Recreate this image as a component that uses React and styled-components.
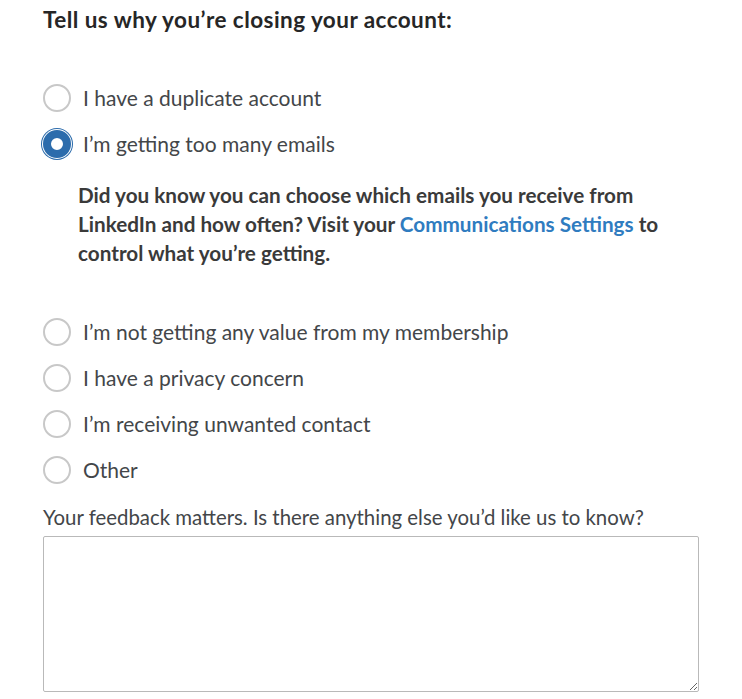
import React from "react";
import styled, { createGlobalStyle } from "styled-components";

const GlobalStyle = createGlobalStyle`
  body {
    margin: 0;
    background: #ffffff;
    font-family: Lato, "Open Sans", "Liberation Sans", sans-serif;
    color: #434649;
  }
`;

const reasons = [
  { id: "duplicate", label: "I have a duplicate account" },
  { id: "emails", label: "I’m getting too many emails", checked: true },
  { id: "value", label: "I’m not getting any value from my membership" },
  { id: "privacy", label: "I have a privacy concern" },
  { id: "contact", label: "I’m receiving unwanted contact" },
  { id: "other", label: "Other" },
];

const CloseAccount = () => {
  return (
    <Form>
      <Heading>Tell us why you’re closing your account:</Heading>
      <RadioList>
        {reasons.map((r) => (
          <React.Fragment key={r.id}>
            <RadioRow>
              <Radio checked={!!r.checked} />
              <Label>{r.label}</Label>
            </RadioRow>
            {r.checked && (
              <Hint>
                Did you know you can choose which emails you receive from
                LinkedIn and how often? Visit your{" "}
                <a href="#settings">Communications Settings</a> to control
                what you’re getting.
              </Hint>
            )}
          </React.Fragment>
        ))}
      </RadioList>
      <FeedbackLabel>
        Your feedback matters. Is there anything else you’d like us to know?
      </FeedbackLabel>
      <Feedback />
    </Form>
  );
};

const Form = styled.form`
  padding: 6px 0 0 43px;
  width: 656px;
`;

const Heading = styled.h2`
  margin: 0;
  font-size: 22.5px;
  line-height: 28px;
  letter-spacing: 0.45px;
  font-weight: 700;
  color: #262626;
`;

const RadioList = styled.div`
  margin-top: 41px;
  display: flex;
  flex-direction: column;
`;

const RadioRow = styled.label`
  display: flex;
  align-items: center;
  gap: 12px;
  height: 46px;
  cursor: pointer;
`;

const Radio = styled.span`
  box-sizing: border-box;
  flex: none;
  width: 28px;
  height: 28px;
  border-radius: 50%;
  border: ${(p) => (p.checked ? "8px solid #2c6cac" : "2px solid #c8c8c8")};
  background: #ffffff;
  box-shadow: ${(p) =>
    p.checked ? "0 0 0 1px #ffffff, 0 0 0 2px #2c6cac" : "none"};
`;

const Label = styled.span`
  font-size: 21px;
  line-height: 28px;
  color: #434649;
`;

const Hint = styled.p`
  margin: 14px 0 41px 35px;
  font-size: 20.7px;
  line-height: 29px;
  font-weight: 700;
  color: #3a3a3a;
  a {
    color: #2f7cc0;
    text-decoration: none;
  }
`;

const FeedbackLabel = styled.div`
  margin-top: 10px;
  font-size: 20.4px;
  line-height: 28px;
  color: #434649;
`;

const Feedback = styled.textarea`
  display: block;
  box-sizing: border-box;
  margin-top: 5px;
  width: 656px;
  height: 156px;
  border: 1px solid #b9b9b9;
  border-radius: 2px;
  font-family: inherit;
  font-size: 18px;
`;

export default function App() {
  return (
    <>
      <GlobalStyle />
      <CloseAccount />
    </>
  );
}
